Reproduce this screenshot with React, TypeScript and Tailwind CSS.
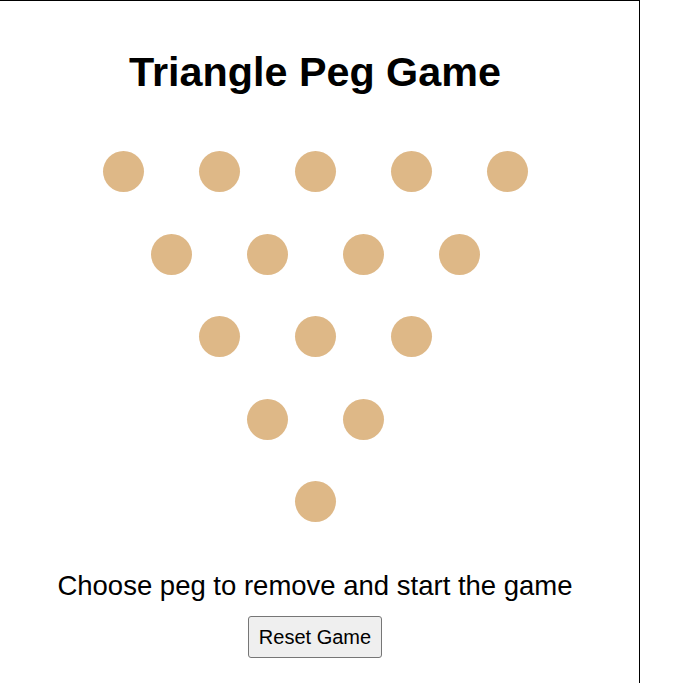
import React from "react";

const rows = [5, 4, 3, 2, 1];

export default function App() {
  return (
    <div className="bg-white w-[693px] h-[683px] overflow-hidden" style={{ fontFamily: '"Liberation Sans", Arial, sans-serif' }}>
      <div className="-ml-[10px] w-[650px] h-[720px] border-t border-r border-l border-black flex flex-col items-center pt-[48px]">
        <h1 className="text-[41.3px] leading-[46px] font-bold text-black">Triangle Peg Game</h1>
        <div className="mt-[56px] flex flex-col items-center gap-[41.5px]">
          {rows.map((n, r) => (
            <div key={r} className="flex gap-[55px]">
              {Array.from({ length: n }).map((_, i) => (
                <div key={i} className="w-[41px] h-[41px] rounded-full bg-[#deb887] cursor-pointer" />
              ))}
            </div>
          ))}
        </div>
        <p className="mt-[48px] text-[27.5px] leading-[32px] text-black">Choose peg to remove and start the game</p>
        <button className="mt-[14px] px-[9.5px] h-[42px] text-[20px] leading-[23px] text-black bg-[#efefef] border border-[#767676] rounded-[3px]">
          Reset Game
        </button>
      </div>
    </div>
  );
}
